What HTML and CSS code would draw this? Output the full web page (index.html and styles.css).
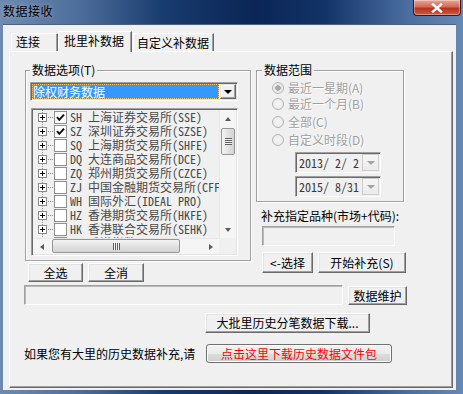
FILE: index.html
```html
<!DOCTYPE html>
<html lang="zh-CN">
<head>
    <meta charset="UTF-8">
    <meta name="viewport" content="width=device-width, initial-scale=1.0">
    <title>数据接收</title>
    <link rel="stylesheet" href="styles.css">
</head>
<body>

<div class="window">
    <!-- Title bar -->
    <div class="titlebar">
        <span class="title">数据接收</span>
        <div class="close-btn">
            <svg width="14" height="10" viewBox="0 0 14 10"><path d="M3 1.5 L11 8.5 M11 1.5 L3 8.5" stroke="#fff" stroke-width="2.4" stroke-linecap="square"/></svg>
        </div>
    </div>

    <div class="client">
        <div class="tabs">
            <div class="tab tab-first">连接</div>
            <div class="tab active">批里补数据</div>
            <div class="tab tab-last">自定义补数据</div>
        </div>

        <div class="panel">
            <div class="top">
                <div class="col-left">
                    <fieldset class="group group-options">
                        <legend>数据选项(T)</legend>
                        <div class="combo">
                            <div class="combo-value">除权财务数据</div>
                            <div class="combo-btn"><span class="arrow-down"></span></div>
                        </div>
                        <div class="listbox">
                            <div class="list-items">
                                <div class="item"><span class="tree"><span class="plus"></span></span><span class="check on"><svg width="11" height="11" viewBox="0 0 11 11"><path d="M2 5.2 L4.3 7.8 L9 2.6" fill="none" stroke="#111" stroke-width="2"/></svg></span><span class="name">SH 上海证券交易所(SSE)</span></div>
                                <div class="item"><span class="tree"><span class="plus"></span></span><span class="check on"><svg width="11" height="11" viewBox="0 0 11 11"><path d="M2 5.2 L4.3 7.8 L9 2.6" fill="none" stroke="#111" stroke-width="2"/></svg></span><span class="name">SZ 深圳证券交易所(SZSE)</span></div>
                                <div class="item"><span class="tree"><span class="plus"></span></span><span class="check"></span><span class="name">SQ 上海期货交易所(SHFE)</span></div>
                                <div class="item"><span class="tree"><span class="plus"></span></span><span class="check"></span><span class="name">DQ 大连商品交易所(DCE)</span></div>
                                <div class="item"><span class="tree"><span class="plus"></span></span><span class="check"></span><span class="name">ZQ 郑州期货交易所(CZCE)</span></div>
                                <div class="item"><span class="tree"><span class="plus"></span></span><span class="check"></span><span class="name">ZJ 中国金融期货交易所(CFFEX)</span></div>
                                <div class="item"><span class="tree"><span class="plus"></span></span><span class="check"></span><span class="name">WH 国际外汇(IDEAL PRO)</span></div>
                                <div class="item"><span class="tree"><span class="plus"></span></span><span class="check"></span><span class="name">HZ 香港期货交易所(HKFE)</span></div>
                                <div class="item"><span class="tree"><span class="plus"></span></span><span class="check"></span><span class="name">HK 香港联合交易所(SEHK)</span></div>
                                <div class="item"><span class="tree"><span class="plus"></span></span><span class="check"></span><span class="name">HI 香港指数(HKI)</span></div>
                            </div>
                            <div class="vscroll">
                                <div class="sb-btn"><span class="arrow-up"></span></div>
                                <div class="sb-track">
                                    <div class="thumb-v"><span class="grip-v"></span></div>
                                </div>
                                <div class="sb-btn"><span class="arrow-down gray"></span></div>
                            </div>
                            <div class="hscroll">
                                <div class="sb-btn-h"><span class="arrow-left"></span></div>
                                <div class="sb-track-h">
                                    <div class="thumb-h"><span class="grip-h"></span></div>
                                </div>
                                <div class="sb-btn-h"><span class="arrow-right"></span></div>
                            </div>
                            <div class="corner"></div>
                        </div>
                    </fieldset>
                    <div class="btn-row">
                        <button class="btn btn-all">全选</button>
                        <button class="btn btn-none">全消</button>
                    </div>
                </div>

                <div class="col-right">
                    <fieldset class="group group-range">
                        <legend>数据范围</legend>
                        <div class="radio r1"><span class="radio-dot checked"></span>最近一星期(A)</div>
                        <div class="radio r2"><span class="radio-dot"></span>最近一个月(B)</div>
                        <div class="radio r3"><span class="radio-dot"></span>全部(C)</div>
                        <div class="radio r4"><span class="radio-dot"></span>自定义时段(D)</div>
                        <div class="date d1"><span class="date-text">2013/ 2/ 2</span><span class="date-btn"><span class="arrow-down light"></span></span></div>
                        <div class="date d2"><span class="date-text">2015/ 8/31</span><span class="date-btn"><span class="arrow-down light"></span></span></div>
                    </fieldset>
                    <div class="hint">补充指定品种(市场+代码):</div>
                    <div class="edit edit-code"></div>
                    <div class="btn-row">
                        <button class="btn btn-pick">&lt;-选择</button>
                        <button class="btn btn-start">开始补充(S)</button>
                    </div>
                </div>
            </div>

            <div class="maint-row">
                <div class="edit edit-status"></div>
                <button class="btn btn-maint">数据维护</button>
            </div>

            <div class="dl-row">
                <button class="btn btn-dl">大批里历史分笔数据下载...</button>
            </div>

            <div class="pkg-row">
                <span class="pkg-text">如果您有大里的历史数据补充,请</span>
                <button class="btn-pkg">点击这里下载历史数据文件包</button>
            </div>
        </div>
    </div>
</div>

</body>
</html>
```

FILE: styles.css
```css
* {
    box-sizing: border-box;
}
html, body {
    margin: 0;
    padding: 0;
}
body {
    width: 463px;
    height: 394px;
    overflow: hidden;
    font-family: "Noto Sans CJK SC", "Liberation Sans", sans-serif;
    font-size: 12px;
    line-height: 14px;
    color: #000;
}
.window {
    width: 463px;
    height: 394px;
    display: flex;
    flex-direction: column;
    background: linear-gradient(to right, #6f8ab0 0%, #4b6c9a 18%, #193c6e 35%, #0a2556 55%, #123366 70%, #4a6e9f 88%, #6688b4 100%);
}

/* title bar */
.titlebar {
    height: 24px;
    flex: none;
    display: flex;
    align-items: flex-start;
}
.title {
    padding: 4px 0 0 3px;
    letter-spacing: 0.5px;
    color: #000;
    text-shadow: 0 0 5px rgba(255, 255, 255, 0.45);
}
.close-btn {
    margin-left: auto;
    margin-right: 2px;
    width: 48px;
    height: 16px;
    border: 1px solid #47150e;
    border-top: none;
    border-radius: 0 0 4px 4px;
    background: linear-gradient(#e9a596 0%, #d26a55 45%, #b8321c 55%, #c95b3f 100%);
    box-shadow: inset 0 0 0 1px rgba(255, 255, 255, 0.35);
    display: flex;
    align-items: center;
    justify-content: center;
}

/* client area */
.client {
    flex: 1;
    margin: 0 7px 4px 3px;
    background: #f0f0f0;
    border-top: 1px solid #4d6283;
    padding: 6px 3px 2px 6px;
    display: flex;
    flex-direction: column;
}
.tabs {
    height: 20px;
    display: flex;
    align-items: flex-end;
    padding-left: 2px;
}
.tab {
    height: 18px;
    padding-top: 1px;
    background: #f0f0f0;
    border-top: 1px solid #fff;
    border-left: 1px solid #fff;
    border-right: 1px solid #696969;
    box-shadow: inset -1px 0 0 #a0a0a0;
    white-space: nowrap;
}
.tab-first {
    width: 47px;
    padding-left: 4px;
}
.tab.active {
    width: 74px;
    height: 21px;
    padding-top: 2px;
    padding-left: 5px;
    margin-bottom: -1px;
    position: relative;
    z-index: 1;
}
.tab-last {
    width: 81px;
    margin-left: 1px;
    padding-left: 3px;
    padding-top: 2px;
}
.panel {
    flex: 1;
    border: 1px solid;
    border-color: #fff #696969 #696969 #fff;
    box-shadow: inset -1px -1px 0 #a0a0a0;
    padding: 11px 0 0 14px;
}

/* top section */
.top {
    display: flex;
    align-items: flex-start;
}
.col-left {
    width: 226px;
    margin-left: 1px;
}
.col-right {
    width: 151px;
    margin-left: 5px;
}
.group {
    margin: 0;
    border: 1px solid #a0a0a0;
    box-shadow: inset 1px 1px 0 #fff, 1px 1px 0 #fff;
    min-width: 0;
}
.group legend {
    padding: 0 2px;
    line-height: 14px;
    background: #f0f0f0;
}
.group-options {
    width: 226px;
    padding: 0 4px 4px 4px;
}
.group-range {
    width: 148px;
    padding: 0 0 4px 5px;
}

/* combo */
.combo {
    margin-top: 5px;
    width: 208px;
    height: 19px;
    display: flex;
    padding: 1px;
    background: #fff;
    border: 1px solid;
    border-color: #a0a0a0 #fff #fff #a0a0a0;
    box-shadow: inset 1px 1px 0 #696969, inset -1px -1px 0 #e3e3e3;
}
.combo-value {
    flex: 1;
    background: #3399ff;
    border: 1px dotted #f2c46a;
    color: #fff;
    line-height: 13px;
    padding-left: 0;
    margin-right: 1px;
}
.combo-btn {
    width: 16px;
    display: flex;
    align-items: center;
    justify-content: center;
    background: #f0f0f0;
    border: 1px solid;
    border-color: #e3e3e3 #696969 #696969 #e3e3e3;
    box-shadow: inset -1px -1px 0 #a0a0a0, inset 1px 1px 0 #fff;
}
.arrow-down {
    width: 0;
    height: 0;
    border-left: 4px solid transparent;
    border-right: 4px solid transparent;
    border-top: 4px solid #000;
}
.arrow-down.gray {
    border-left-width: 3.5px;
    border-right-width: 3.5px;
    border-top: 4px solid #5a5a5a;
}
.arrow-down.light {
    border-top-color: #a3a3a3;
}
.arrow-up {
    width: 0;
    height: 0;
    border-left: 3.5px solid transparent;
    border-right: 3.5px solid transparent;
    border-bottom: 4px solid #5a5a5a;
}
.arrow-left {
    width: 0;
    height: 0;
    border-top: 3.5px solid transparent;
    border-bottom: 3.5px solid transparent;
    border-right: 4px solid #5a5a5a;
}
.arrow-right {
    width: 0;
    height: 0;
    border-top: 3.5px solid transparent;
    border-bottom: 3.5px solid transparent;
    border-left: 4px solid #5a5a5a;
}

/* list box */
.listbox {
    margin: 7px 0 0 1px;
    width: 207px;
    height: 148px;
    padding: 1px;
    border: 1px solid;
    border-color: #a0a0a0 #fff #fff #a0a0a0;
    box-shadow: inset 1px 1px 0 #696969, inset -1px -1px 0 #e3e3e3;
    background: #f0f0f0;
    display: grid;
    grid-template-columns: 1fr 17px;
    grid-template-rows: 1fr 16px;
}
.list-items {
    overflow: hidden;
    min-width: 0;
    min-height: 0;
}
.item {
    height: 14px;
    display: flex;
    align-items: center;
    padding-left: 5px;
    white-space: nowrap;
}
.tree {
    flex: none;
    width: 16px;
    height: 14px;
    display: flex;
    align-items: center;
    background:
        repeating-linear-gradient(to bottom, #909090 0 1px, transparent 1px 2px) 4px 0 / 1px 100% no-repeat,
        repeating-linear-gradient(to right, #909090 0 1px, transparent 1px 2px) 10px 7px / 6px 1px no-repeat;
}
.plus {
    width: 9px;
    height: 9px;
    border: 1px solid #8a8a8a;
    background:
        linear-gradient(#000, #000) center / 5px 1px no-repeat,
        linear-gradient(#000, #000) center / 1px 5px no-repeat,
        #fff;
}
.check {
    flex: none;
    width: 13px;
    height: 13px;
    border: 1px solid #8e8f8f;
    background: #fff;
    display: flex;
    align-items: center;
    justify-content: center;
}
.name {
    margin-left: 3px;
    font-family: "Noto Sans Mono CJK SC", "Noto Sans CJK SC", monospace;
    font-size: 12px;
    color: #4a4a4a;
}
.vscroll {
    display: flex;
    flex-direction: column;
    background: #f5f5f5;
    border-left: 1px solid #e8e8e8;
}
.sb-btn {
    height: 17px;
    display: flex;
    align-items: center;
    justify-content: center;
}
.sb-track {
    flex: 1;
}
.thumb-v {
    margin: 1px 1px 0 1px;
    height: 27px;
    border: 1px solid #979797;
    border-radius: 2px;
    background: linear-gradient(to right, #f4f4f4, #e2e2e2 50%, #d4d4d4);
    display: flex;
    align-items: center;
    justify-content: center;
}
.grip-v {
    width: 7px;
    height: 7px;
    background: repeating-linear-gradient(to bottom, #606060 0 1px, #f0f0f0 1px 2px);
}
.hscroll {
    display: flex;
    background: #f5f5f5;
    border-top: 1px solid #e8e8e8;
}
.sb-btn-h {
    width: 17px;
    display: flex;
    align-items: center;
    justify-content: center;
}
.sb-track-h {
    flex: 1;
}
.thumb-h {
    margin: 0 0 1px 2px;
    width: 128px;
    height: 14px;
    border: 1px solid #979797;
    border-radius: 2px;
    background: linear-gradient(#f4f4f4, #e2e2e2 50%, #d4d4d4);
    display: flex;
    align-items: center;
    justify-content: center;
}
.grip-h {
    width: 7px;
    height: 7px;
    background: repeating-linear-gradient(to right, #606060 0 1px, #f0f0f0 1px 2px);
}
.corner {
    background: #f0f0f0;
}

/* buttons */
.btn {
    padding: 0;
    margin: 0;
    font-family: "Noto Sans CJK SC", "Liberation Sans", sans-serif;
    font-size: 12px;
    line-height: 14px;
    color: #000;
    background: #f0f0f0;
    border: 1px solid;
    border-color: #fff #696969 #696969 #fff;
    box-shadow: inset -1px -1px 0 #a0a0a0, inset 1px 1px 0 #e3e3e3;
}
.btn-row {
    display: flex;
}
.col-left .btn-row {
    margin-top: 2px;
}
.btn-all {
    width: 55px;
    height: 19px;
    margin-left: 3px;
}
.btn-none {
    width: 56px;
    height: 19px;
    margin-left: 5px;
}

/* date range */
.radio {
    height: 16px;
    display: flex;
    align-items: center;
    margin-left: 10px;
    color: #a0a0a0;
    text-shadow: 1px 1px 0 #fff;
    white-space: nowrap;
}
.r1 {
    margin-top: 3px;
}
.r3, .r4 {
    margin-top: 2px;
}
.radio-dot {
    width: 12px;
    height: 12px;
    margin-right: 4px;
    border: 1px solid #b4b4b4;
    border-radius: 50%;
    background: radial-gradient(circle, #f6f6f6, #e6e6e6);
}
.radio-dot.checked {
    background: radial-gradient(circle, #a8a8a8 0 2.5px, #e6e6e6 3px, #f6f6f6);
}
.date {
    margin-left: 33px;
    width: 86px;
    height: 21px;
    display: flex;
    align-items: center;
    padding-left: 3px;
    border: 1px solid;
    border-color: #a0a0a0 #fff #fff #a0a0a0;
    box-shadow: inset 1px 1px 0 #696969;
    background: #f0f0f0;
}
.d1 {
    margin-top: 4px;
}
.d2 {
    margin-top: 3px;
}
.date-text {
    font-family: "Noto Sans Mono CJK SC", "Liberation Mono", monospace;
    color: #3a3a3a;
    white-space: pre;
}
.date-btn {
    margin-left: auto;
    margin-right: 1px;
    width: 17px;
    height: 17px;
    border: 1px solid #cfcfcf;
    background: linear-gradient(#f6f6f6, #ebebeb);
    display: flex;
    align-items: center;
    justify-content: center;
}
.hint {
    margin-top: 7px;
    margin-left: 5px;
    white-space: nowrap;
}
.edit {
    border: 1px solid;
    border-color: #a0a0a0 #fff #fff #a0a0a0;
    box-shadow: inset 1px 1px 0 #b9b9b9;
    background: #f0f0f0;
}
.edit-code {
    margin: 3px 0 0 6px;
    width: 133px;
    height: 20px;
}
.col-right .btn-row {
    margin-top: 6px;
}
.btn-pick {
    margin-left: 6px;
    width: 51px;
    height: 21px;
}
.btn-start {
    margin-left: 5px;
    width: 88px;
    height: 21px;
}

/* bottom rows */
.maint-row {
    display: flex;
    align-items: flex-start;
    margin-top: 3px;
}
.edit-status {
    width: 319px;
    height: 20px;
}
.btn-maint {
    margin: 1px 0 0 5px;
    width: 59px;
    height: 19px;
}
.dl-row {
    margin-top: 8px;
    padding-left: 181px;
}
.btn-dl {
    width: 165px;
    height: 20px;
}
.pkg-row {
    margin-top: 11px;
    display: flex;
    align-items: center;
}
.pkg-text {
    width: 182px;
    white-space: nowrap;
}
.btn-pkg {
    width: 186px;
    height: 19px;
    padding: 0;
    font-family: "Noto Sans CJK SC", "Liberation Sans", sans-serif;
    font-size: 12px;
    line-height: 14px;
    color: #ff0000;
    border: 1px solid #707070;
    border-radius: 3px;
    background: linear-gradient(#f2f2f2 0%, #ebebeb 50%, #dddddd 51%, #cfcfcf 100%);
    box-shadow: inset 0 0 0 1px #fcfcfc;
}
```
